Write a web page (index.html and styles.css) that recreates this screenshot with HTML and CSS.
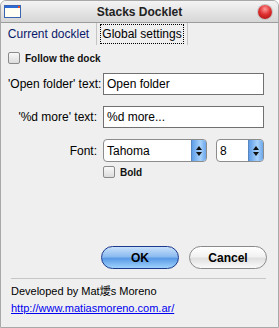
FILE: index.html
```html
<!DOCTYPE html>
<html lang="en">
<head>
  <meta charset="UTF-8">
  <title>Stacks Docklet</title>
  <link rel="stylesheet" href="styles.css">
</head>
<body>
  <div class="window">
    <div class="titlebar">
      <svg class="app-icon" width="17" height="13" viewBox="0 0 17 13">
        <rect x="0.5" y="0.5" width="16" height="12" fill="#fffff4" stroke="#3a64b0"/>
        <rect x="1" y="1" width="15" height="2" fill="#2c6bd6"/>
        <rect x="14" y="1" width="2" height="2" fill="#e05030"/>
      </svg>
      <div class="title">Stacks Docklet</div>
      <div class="close"></div>
    </div>

    <div class="tabs">
      <div class="tab">Current docklet</div>
      <div class="tab current"><span class="focus">Global settings</span></div>
    </div>

    <div class="content">
      <label class="check-row">
        <span class="checkbox"></span>
        <span class="small-bold">Follow the dock</span>
      </label>

      <div class="form">
        <div class="label">'Open folder' text:</div>
        <div class="textbox">Open folder</div>

        <div class="label">'%d more' text:</div>
        <div class="textbox">%d more...</div>

        <div class="label">Font:</div>
        <div class="font-row">
          <div class="popup font-name">
            <span class="value">Tahoma</span>
            <span class="stepper"><i class="up"></i><i class="down"></i></span>
          </div>
          <div class="popup font-size">
            <span class="value">8</span>
            <span class="stepper"><i class="up"></i><i class="down"></i></span>
          </div>
        </div>

        <div></div>
        <label class="check-row bold-row">
          <span class="checkbox"></span>
          <span class="small-bold">Bold</span>
        </label>
      </div>

      <div class="buttons">
        <button class="btn ok">OK</button>
        <button class="btn cancel">Cancel</button>
      </div>

      <div class="separator"></div>

      <div class="credit">
        <div>Developed by Mat燰s Moreno</div>
        <a href="#">http://www.matiasmoreno.com.ar/</a>
      </div>
    </div>
  </div>
</body>
</html>
```

FILE: styles.css
```css
body {
  margin: 0;
  background: #ffffff;
  font-family: 'Liberation Sans', 'Noto Sans CJK TC', sans-serif;
  font-size: 11px;
  color: #000;
}

.window {
  width: 279px;
  height: 328px;
  box-sizing: border-box;
  border: 1px solid #a8a8a8;
  border-radius: 6px 6px 0 0;
  background: #efefef;
  display: flex;
  flex-direction: column;
  overflow: hidden;
}

.titlebar {
  height: 21px;
  flex: none;
  display: flex;
  align-items: center;
  padding: 0 6px 0 3px;
  background: linear-gradient(#f4f4f4, #d6d6d6);
  border-bottom: 1px solid #9c9c9c;
}

.app-icon {
  flex: none;
}

.title {
  flex: 1;
  text-align: center;
  font-weight: bold;
  font-size: 12px;
  color: #222;
}

.close {
  width: 14px;
  height: 14px;
  border-radius: 50%;
  background: radial-gradient(circle at 50% 30%, #ff9a9a 0, #e03030 45%, #a01010 100%);
  box-shadow: 0 0 0 1px #c4c4c4;
}

.tabs {
  height: 22px;
  flex: none;
  display: flex;
  align-items: stretch;
}

.tab {
  display: flex;
  align-items: center;
  justify-content: center;
  white-space: nowrap;
  color: #0a1a6a;
  font-size: 12px;
  border-right: 1px solid #c4c4c4;
}

.tab:first-child {
  width: 95px;
}

.tab.current {
  width: 90px;
  color: #000;
}

.tab .focus {
  border: 1px dotted #000;
  padding: 2px 1px;
}

.content {
  flex: 1;
  display: flex;
  flex-direction: column;
  padding: 7px 14px 0 7px;
}

.check-row {
  display: flex;
  align-items: center;
  gap: 5px;
}

.checkbox {
  width: 10px;
  height: 10px;
  border: 1px solid #8a8a8a;
  border-radius: 2px;
  background: linear-gradient(#f8f8f8, #dcdcdc);
}

.small-bold {
  font-weight: bold;
  font-size: 10px;
  color: #111;
}

.form {
  margin-top: 9px;
  display: grid;
  grid-template-columns: 89px 1fr;
  column-gap: 6px;
  row-gap: 11px;
  align-items: center;
}

.label {
  text-align: right;
  white-space: nowrap;
  font-size: 12px;
}

.textbox {
  height: 20px;
  border: 1px solid #707070;
  background: #fff;
  padding: 0 3px;
  display: flex;
  align-items: center;
  font-size: 12px;
}

.font-row {
  display: flex;
  gap: 9px;
}

.popup {
  height: 21px;
  border: 1px solid #8c8c8c;
  border-radius: 4px;
  background: #fff;
  display: flex;
  overflow: hidden;
}

.font-name {
  width: 102px;
}

.font-size {
  width: 46px;
}

.popup .value {
  flex: 1;
  padding-left: 3px;
  display: flex;
  align-items: center;
  font-size: 12px;
}

.stepper {
  width: 14px;
  display: flex;
  flex-direction: column;
  align-items: center;
  justify-content: center;
  gap: 2px;
  background: linear-gradient(90deg, #5e9ee8, #a8d2fb 60%, #6aa6ea);
  border-left: 1px solid #5a86c0;
}

.stepper .up {
  border-left: 3px solid transparent;
  border-right: 3px solid transparent;
  border-bottom: 4px solid #111;
}

.stepper .down {
  border-left: 3px solid transparent;
  border-right: 3px solid transparent;
  border-top: 4px solid #111;
}

.bold-row {
  margin-top: -7px;
}

.buttons {
  margin-top: auto;
  margin-right: -3px;
  display: flex;
  justify-content: flex-end;
  gap: 10px;
}

.btn {
  width: 78px;
  height: 23px;
  border-radius: 12px;
  font-family: 'Liberation Sans', sans-serif;
  font-weight: bold;
  font-size: 12px;
  color: #000;
  padding: 0;
}

.btn.ok {
  border: 1px solid #1c3a8c;
  background: linear-gradient(#c8e0fa 0, #8cbcf0 45%, #5a9ae6 55%, #9ed2fc 100%);
}

.btn.cancel {
  border: 1px solid #8a8a8a;
  background: linear-gradient(#ffffff 0, #f2f2f2 45%, #e0e0e0 55%, #fafafa 100%);
}

.separator {
  margin: 9px -2px 0 3px;
  border-top: 1px solid #c6c6c6;
}

.credit {
  padding: 4px 0 10px 3px;
  line-height: 17px;
  font-size: 11px;
}

.credit a {
  color: #0000ee;
}
```
